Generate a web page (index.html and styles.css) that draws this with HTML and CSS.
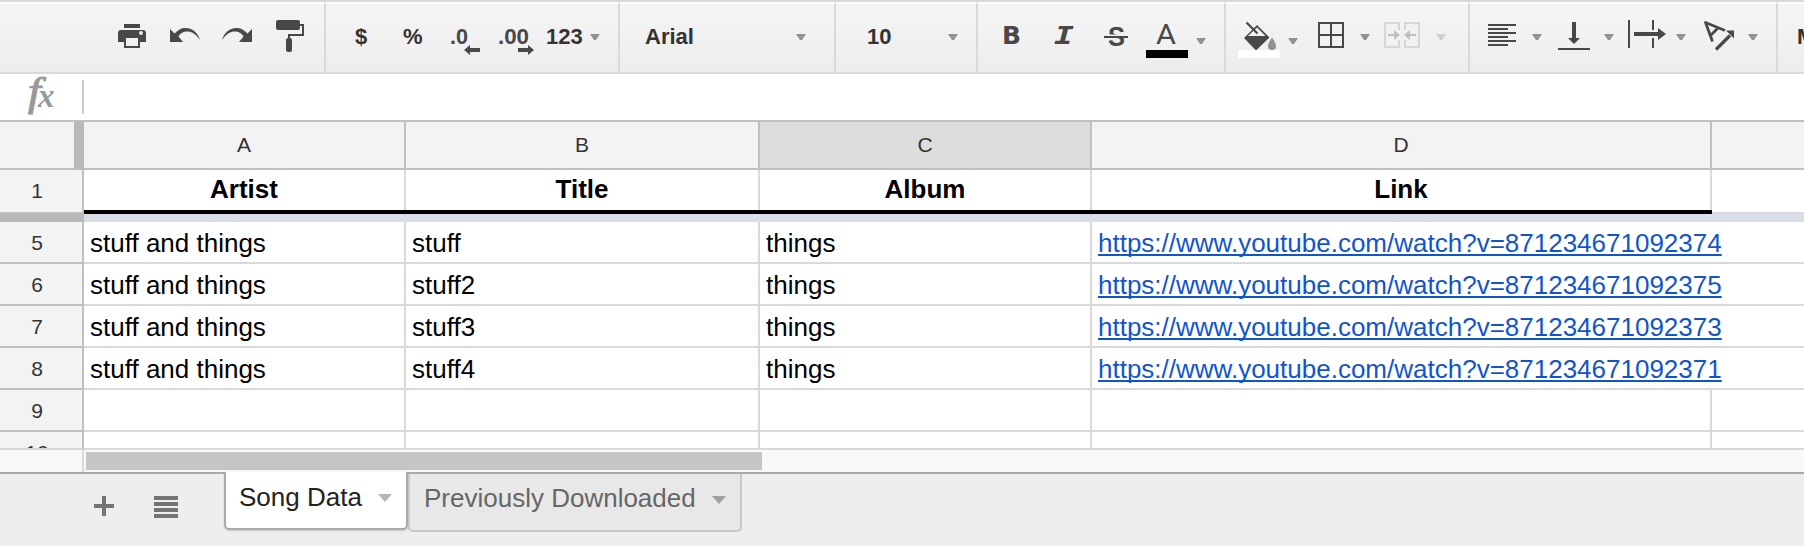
FILE: index.html
```html
<!DOCTYPE html>
<html lang="en">
<head>
<meta charset="utf-8">
<title>Song Data</title>
<link rel="stylesheet" href="styles.css">
</head>
<body>
<div class="app">
  <div class="toolbar">
    <div class="group g-history">
      <svg class="icon" width="44" height="68" viewBox="110 4 44 68"><path d="M124 24h16v4h-16zM121 30h22q3 0 3 3v9h-6v6h-16v-6h-6v-9q0-3 3-3zM126 38v8h12v-8z" fill-rule="evenodd"/><circle cx="141" cy="33" r="1.9" fill="#f2f2f2"/></svg>
      <svg class="icon" width="56" height="68" viewBox="154 4 56 68"><path d="M170 29l4.5 4.5C178 30 181 28 185.500 28 193 28 198 33 200 40 196 34 191.500 31.500 187 31.500c-4 0-7 2-8.500 5L183 42h-13z"/></svg>
      <svg class="icon" width="56" height="68" viewBox="210 4 56 68"><path transform="translate(422 0) scale(-1 1)" d="M170 29l4.500 4.500C178 30 181 28 185.500 28 193 28 198 33 200 40 196 34 191.500 31.500 187 31.500c-4 0-7 2-8.500 5L183 42h-13z"/></svg>
      <svg class="icon" width="58" height="68" viewBox="266 4 58 68"><rect x="276" y="20" width="24" height="10" rx="2"/><path d="M300 25h3v10h-14v4" fill="none" stroke="#484848" stroke-width="2"/><rect x="286" y="38" width="6" height="14" rx="2"/></svg>
    </div>
    <div class="group g-format">
      <span class="label l-dollar">$</span>
      <span class="label l-percent">%</span>
      <svg class="icon" width="50" height="68" viewBox="440 4 50 68"><text class="decimal" x="450" y="43.500" textLength="18" lengthAdjust="spacingAndGlyphs">.0</text><path d="M464 50l6-5v3h10v4h-10v3z"/></svg>
      <svg class="icon" width="50" height="68" viewBox="490 4 50 68"><text class="decimal" x="498" y="43.500" textLength="31" lengthAdjust="spacingAndGlyphs">.00</text><path d="M534 50l-6-5v3h-10v4h10v3z"/></svg>
      <span class="label l-123">123</span>
      <i class="caret"></i>
    </div>
    <div class="group g-font"><span class="label">Arial</span><i class="caret"></i></div>
    <div class="group g-size"><span class="label">10</span><i class="caret"></i></div>
    <div class="group g-text">
      <svg class="icon" width="58" height="68" viewBox="978 4 58 68"><text class="bold" x="1002" y="44" textLength="19" lengthAdjust="spacingAndGlyphs">B</text></svg>
      <svg class="icon" width="58" height="68" viewBox="1036 4 58 68"><text class="italic" x="1054" y="44" textLength="20" lengthAdjust="spacingAndGlyphs">I</text></svg>
      <svg class="icon" width="46" height="68" viewBox="1094 4 46 68"><text class="strike" x="1108" y="45.500" textLength="17" lengthAdjust="spacingAndGlyphs">S</text><path d="M1102 34.500h28v1.500h-28z" fill="#f1f1f1"/><path d="M1104 36h24v2h-24z"/></svg>
      <svg class="icon" width="52" height="68" viewBox="1140 4 52 68"><text class="color-a" x="1156" y="44" textLength="20" lengthAdjust="spacingAndGlyphs">A</text><path d="M1146 50h42v8h-42z" fill="#000"/></svg>
      <i class="caret low c-4"></i>
    </div>
    <div class="group g-cell">
      <svg class="icon" width="58" height="68" viewBox="1226 4 58 68"><path d="M1244 38l13-13 12.500 12.500L1256 50.500zM1248 36h17.500l-8.500-8.500z" fill-rule="evenodd"/><path d="M1246.500 22.500l11 11" stroke="#484848" stroke-width="2.200"/><path d="M1272 37.500q4 5.500 4 8.500a4 4 0 0 1-8 0q0-3 4-8.500z" fill="#919191"/><path d="M1238 50h42v8h-42z" fill="#fff"/></svg>
      <i class="caret low c-4"></i>
      <svg class="icon" width="54" height="68" viewBox="1298 4 54 68"><path d="M1319 23h24v24h-24zM1331 23v24M1319 35h24" fill="none" stroke="#484848" stroke-width="2"/></svg>
      <i class="caret c-8"></i>
      <svg class="icon" width="58" height="68" viewBox="1370 4 58 68"><path d="M1399 30v-7h-14v24h14v-7M1405 30v-7h14v24h-14v-7" fill="none" stroke="#d6d6d6" stroke-width="2"/><path d="M1388 34h6v-4l6 5-6 5v-4h-6zM1416 34h-6v-4l-6 5 6 5v-4h6z" fill="#c0c0c0"/></svg>
      <i class="caret c-8 off"></i>
    </div>
    <div class="group g-align">
      <svg class="icon" width="54" height="68" viewBox="1470 4 54 68"><path d="M1488 24h28v2h-28zM1488 28h20v2h-20zM1488 32h28v2h-28zM1488 36h20v2h-20zM1488 40h28v2h-28zM1488 44h20v2h-20z"/></svg>
      <i class="caret c-8"></i>
      <svg class="icon" width="54" height="68" viewBox="1542 4 54 68"><path d="M1572 22h4v16h4l-6 6-6-6h4zM1558 48h32v2h-32z"/></svg>
      <i class="caret c-8"></i>
      <svg class="icon" width="54" height="68" viewBox="1614 4 54 68"><path d="M1628 20h2v28h-2zM1652 20h2v10h-2zM1652 38h2v10h-2zM1634 32h24v-4l8 6-8 6v-4h-24z"/></svg>
      <i class="caret c-8"></i>
      <svg class="icon" width="54" height="68" viewBox="1686 4 54 68"><path d="M1725 30.500l-19.500-8 7 19M1718.500 27.500l-9 9" fill="none" stroke="#484848" stroke-width="2.800" stroke-linejoin="round"/><path d="M1716 49.500l14-14" stroke="#484848" stroke-width="3.200"/><path d="M1726 30.500h8v8z"/></svg>
      <i class="caret c-8"></i>
    </div>
    <div class="group g-more"><span class="label">M</span></div>
  </div>

  <div class="formula">
    <svg class="fx" width="82" height="46" viewBox="0 74 82 46"><text class="fx-f" transform="translate(28 105) scale(1.17 1)">f</text><text class="fx-x" x="38" y="107">x</text></svg>
    <div class="formula-input"></div>
  </div>

  <div class="grid">
    <div class="row head"><div class="corner"></div><div class="cell">A</div><div class="cell">B</div><div class="cell selected">C</div><div class="cell">D</div><div class="cell last"></div></div>
    <div class="row title"><div class="num">1</div><div class="cell">Artist</div><div class="cell">Title</div><div class="cell">Album</div><div class="cell">Link</div><div class="cell last"></div></div>
    <div class="freeze"><div class="freeze-head"></div><div class="freeze-line"></div></div>
    <div class="row"><div class="num">5</div><div class="cell">stuff and things</div><div class="cell">stuff</div><div class="cell">things</div><div class="cell spill"><a>https://www.youtube.com/watch?v=871234671092374</a></div><div class="cell last"></div></div>
    <div class="row"><div class="num">6</div><div class="cell">stuff and things</div><div class="cell">stuff2</div><div class="cell">things</div><div class="cell spill"><a>https://www.youtube.com/watch?v=871234671092375</a></div><div class="cell last"></div></div>
    <div class="row"><div class="num">7</div><div class="cell">stuff and things</div><div class="cell">stuff3</div><div class="cell">things</div><div class="cell spill"><a>https://www.youtube.com/watch?v=871234671092373</a></div><div class="cell last"></div></div>
    <div class="row"><div class="num">8</div><div class="cell">stuff and things</div><div class="cell">stuff4</div><div class="cell">things</div><div class="cell spill"><a>https://www.youtube.com/watch?v=871234671092371</a></div><div class="cell last"></div></div>
    <div class="row"><div class="num">9</div><div class="cell"></div><div class="cell"></div><div class="cell"></div><div class="cell"></div><div class="cell last"></div></div>
    <div class="row cut"><div class="num">10</div><div class="cell"></div><div class="cell"></div><div class="cell"></div><div class="cell"></div><div class="cell last"></div></div>
  </div>

  <div class="scroll"><div class="scroll-corner"></div><div class="thumb"></div></div>

  <div class="tabs">
    <svg class="tab-icons" width="224" height="72" viewBox="0 474 224 72"><path d="M102 496h4v8h8v4h-8v8h-4v-8h-8v-4h8zM154 496h24v4h-24zM154 502h24v4h-24zM154 508h24v4h-24zM154 514h24v4h-24z" fill="#747474"/></svg>
    <div class="tab active">Song Data<i class="tab-caret"></i></div>
    <div class="tab">Previously Downloaded<i class="tab-caret"></i></div>
  </div>
</div>
</body>
</html>
```
FILE: styles.css
```css
* { box-sizing: border-box; }
body {
  margin: 0;
  overflow: hidden;
  background: #fff;
  font-family: "Liberation Sans", Arial, sans-serif;
}
.app { width: 1804px; height: 546px; overflow: hidden; display: flex; flex-direction: column; }

/* Toolbar */
.toolbar {
  display: flex;
  flex: none;
  height: 74px;
  border-top: 2px solid #d9d9d9;
  border-bottom: 2px solid #d9d9d9;
}
.group {
  display: flex;
  flex: none;
  border-right: 2px solid #d9d9d9;
  border-top: 2px solid #fff;
  background: linear-gradient(#f5f5f5, #ededed);
  overflow: hidden;
}
.g-history { width: 326px; padding-left: 110px; }
.g-format { width: 294px; padding-left: 29px; }
.g-font { width: 216px; padding: 0 28px 0 25px; justify-content: space-between; }
.g-size { width: 142px; padding: 0 18px 0 31px; justify-content: space-between; }
.g-text { width: 248px; }
.g-cell { width: 244px; }
.g-align { width: 308px; }
.g-more { width: 26px; border-right: 0; padding-left: 19px; }
.icon { display: block; flex: none; fill: #484848; }
.label { font-size: 22px; font-weight: bold; line-height: 65px; color: #333; }
.l-dollar { width: 48px; }
.l-percent { width: 37px; }
.l-123 { margin-left: 6px; width: 44px; }
.caret {
  flex: none;
  width: 10px;
  height: 6px;
  margin-top: 30px;
  background: #929292;
  clip-path: polygon(0 0, 100% 0, 60% 100%, 40% 100%);
}
.caret.low { margin-top: 34px; }
.c-4 { margin-left: 4px; }
.c-8 { margin-left: 8px; }
.off { background: #d0d0d0; }
.decimal { font: bold 22.500px "Liberation Sans", sans-serif; }
.bold { font: bold 25px "DejaVu Sans", sans-serif; }
.italic { font: italic bold 25px "DejaVu Sans Mono", monospace; }
.strike { font: bold 28px "Liberation Sans", sans-serif; }
.color-a { font: 28px Roboto, sans-serif; }

/* Formula bar */
.formula { display: flex; flex: none; height: 48px; border-bottom: 2px solid #c0c0c0; }
.fx { display: block; flex: none; fill: #999; }
.fx-f { font: italic 39px "Liberation Serif", serif; stroke: #999; stroke-width: 1px; }
.fx-x { font: italic bold 33px "Liberation Serif", serif; }
.formula-input { flex: 1; height: 34px; margin-top: 6px; border-left: 2px solid #ccc; }

/* Sheet grid */
.grid { flex: none; height: 328px; overflow: hidden; }
.row {
  display: grid;
  grid-template-columns: 84px 322px 354px 332px 620px 92px;
  grid-template-rows: 100%;
  height: 42px;
}
.num {
  padding-right: 8px;
  border-right: 2px solid #c0c0c0;
  border-bottom: 2px solid #c0c0c0;
  background: #f3f3f3;
  color: #333;
  font-size: 21px;
  line-height: 42px;
  text-align: center;
}
.cell {
  min-width: 0;
  padding-left: 6px;
  border-right: 2px solid #d9d9d9;
  border-bottom: 2px solid #d9d9d9;
  color: #000;
  font-size: 26px;
  line-height: 43px;
  white-space: nowrap;
}
.cell.last, .cell.spill { border-right: 0; }
.spill a {
  color: #1155cc;
  text-decoration: underline;
  text-decoration-thickness: 2px;
  text-underline-offset: 2px;
  text-decoration-skip-ink: none;
}
.head { height: 48px; }
.head .cell {
  padding: 0;
  border-color: #c0c0c0;
  background: #f3f3f3;
  color: #333;
  font-size: 21px;
  line-height: 46px;
  text-align: center;
}
.head .selected { background: #ddd; }
.corner { border-right: 10px solid #b9b9b9; border-bottom: 2px solid #c0c0c0; background: #f3f3f3; }
.title { height: 44px; }
.title .cell {
  padding: 0 2px 0 0;
  border: 0;
  font-weight: bold;
  line-height: 38px;
  text-align: center;
}
/* the heading rule is painted above the column divider */
.title .cell:not(.last) {
  background:
    linear-gradient(#000, #000) bottom / 100% 4px no-repeat,
    linear-gradient(#d9d9d9, #d9d9d9) right / 2px 100% no-repeat;
}
.title .cell.last { box-shadow: inset 0 -2px #d9d9d9; }
.freeze { display: flex; height: 8px; }
.freeze-head { width: 84px; background: #b9b9b9; }
.freeze-line { flex: 1; background: #dadee9; }
.cut { height: 18px; }
.cut .num, .cut .cell { overflow: hidden; border-bottom-color: #d9d9d9; }

/* Horizontal scrollbar */
.scroll { display: flex; flex: none; height: 22px; background: #f8f8f8; }
.scroll-corner { width: 84px; border-right: 2px solid #d9d9d9; }
.thumb { width: 676px; height: 18px; margin: 2px 0 0 2px; background: #c5c5c5; }

/* Sheet tabs */
.tabs { display: flex; flex: none; align-items: flex-start; height: 74px; border-top: 2px solid #a9a9a9; background: #eee; }
.tab-icons { display: block; flex: none; }
.tab {
  display: flex;
  justify-content: space-between;
  width: 334px;
  height: 58px;
  padding: 0 14px;
  border: 2px solid #c9c9c9;
  border-top: 0;
  border-radius: 0 0 5px 5px;
  background: #e8e8e8;
  color: #666;
  font-size: 26px;
  line-height: 49px;
  white-space: nowrap;
}
.tab.active {
  width: 184px;
  margin-top: -2px;
  padding: 0 14px 0 13px;
  border-color: #aaa;
  background: #fff;
  color: #222;
  line-height: 50px;
  box-shadow: 0 1px 2px rgba(0, 0, 0, .15);
}
.tab-caret {
  width: 14px;
  height: 8px;
  margin-top: 22px;
  background: #a0a0a0;
  clip-path: polygon(0 0, 100% 0, 50% 100%);
}
.active .tab-caret { background: #b5b5b5; }
```
